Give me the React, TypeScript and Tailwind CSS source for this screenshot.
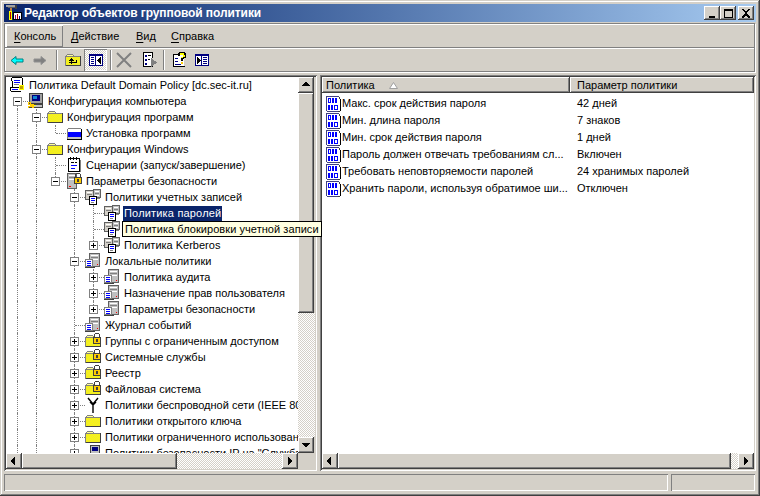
import { useId, type ReactNode } from "react";

const RAISED = "shadow-[inset_-1px_-1px_#404040,inset_1px_1px_#ffffff,inset_-2px_-2px_#808080,inset_2px_2px_#d4d0c8]";
const SUNKEN = "shadow-[inset_1px_1px_#808080,inset_-1px_-1px_#ffffff,inset_2px_2px_#404040,inset_-2px_-2px_#d4d0c8]";
const DITHER = "bg-[repeating-conic-gradient(#d4d0c8_0_25%,#ffffff_0_50%)] bg-[length:2px_2px]";

type R = [number, number, number, number, string];

const D = "dither";

const Pixels = ({ rects }: { rects?: R[] }) => {
  const id = "y" + useId().replace(/[^a-zA-Z0-9]/g, "");
  return (
    <svg width={16} height={16} viewBox="0 0 16 16" shapeRendering="crispEdges" className="shrink-0 block">
      <defs>
        <pattern id={id} width="2" height="2" patternUnits="userSpaceOnUse">
          <rect width="2" height="2" fill="#ffff00" />
          <rect width="1" height="1" fill="#e8e040" />
          <rect x="1" y="1" width="1" height="1" fill="#e8e040" />
        </pattern>
      </defs>
      {rects?.map(([x, y, w, h, c], i) => <rect key={i} x={x} y={y} width={w} height={h} fill={c === D ? `url(#${id})` : c} />)}
    </svg>
  );
};

const FOLDER: R[] = [
  [2, 2, 6, 1, "#808080"], [1, 3, 1, 1, "#808080"], [8, 3, 1, 1, "#808080"], [1, 4, 14, 1, "#808080"],
  [0, 4, 1, 10, "#808080"], [1, 13, 15, 1, "#404040"], [15, 4, 1, 10, "#404040"], [2, 3, 6, 1, "#ffff99"],
  [1, 5, 14, 8, D],
];

const LOCK: R[] = [
  [10, 0, 4, 1, "#404040"], [9, 1, 1, 4, "#404040"], [14, 1, 1, 4, "#404040"],
  [8, 4, 8, 7, "#404040"], [9, 5, 6, 5, "#ffcc00"], [11, 6, 2, 3, "#404040"],
];

const SERVERS: R[] = [
  [8, 0, 8, 9, "#606060"], [9, 1, 6, 7, "#c0c0c0"], [10, 2, 4, 1, "#ffffff"], [10, 4, 4, 1, "#808080"], [10, 6, 4, 1, "#ffffff"],
  [0, 1, 9, 10, "#606060"], [1, 2, 7, 8, "#d4d0c8"], [2, 3, 5, 1, "#ffffff"], [2, 5, 5, 1, "#808080"],
  [4, 7, 8, 9, "#000000"], [5, 8, 6, 7, "#ffffff"], [6, 9, 4, 1, "#0000ff"], [6, 11, 4, 1, "#0000ff"], [6, 13, 3, 1, "#808080"],
  [12, 9, 3, 1, "#808080"],
];

const LOCAL: R[] = [
  [4, 0, 11, 14, "#606060"], [5, 1, 9, 12, "#c0c0c0"], [6, 2, 7, 1, "#ffffff"], [6, 4, 7, 1, "#808080"], [6, 6, 7, 1, "#ffffff"],
  [12, 11, 1, 1, "#ff0000"], [0, 6, 8, 8, "#808080"], [1, 7, 6, 6, "#ffffff"], [2, 8, 4, 1, "#0000ff"], [2, 10, 4, 1, "#0000ff"],
  [2, 12, 4, 1, "#0000ff"], [0, 14, 10, 1, "#404040"],
];

const SCRIPT_ROOT: R[] = [
  [3, 0, 10, 1, "#000000"], [2, 1, 1, 3, "#000000"], [13, 1, 1, 9, "#000000"], [4, 1, 9, 9, "#ffffff"], [3, 4, 1, 8, "#000000"],
  [5, 3, 6, 1, "#0000ff"], [5, 5, 6, 1, "#0000ff"], [5, 7, 5, 1, "#808080"], [1, 10, 10, 1, "#000000"], [1, 11, 1, 3, "#000000"],
  [2, 11, 10, 3, "#ffffff"], [2, 14, 10, 1, "#000000"], [10, 8, 5, 5, "#ffff00"], [11, 9, 3, 3, "#c0a000"], [3, 12, 6, 1, "#0000ff"],
];

const COMPUTER: R[] = [
  [1, 0, 14, 11, "#404040"], [2, 1, 12, 9, "#a0a0a0"], [4, 2, 8, 6, "#000080"], [5, 3, 4, 3, "#1084d0"],
  [4, 11, 11, 4, "#404040"], [5, 12, 9, 2, "#c0c0c0"], [0, 9, 3, 3, "#ffcc00"], [1, 10, 1, 1, "#404040"], [2, 11, 4, 2, "#ffcc00"], [0, 13, 6, 2, "#ffcc00"],
  [1, 14, 3, 1, "#404040"], [6, 12, 2, 1, "#ffff00"],
];

const INSTALL: R[] = [
  [2, 3, 13, 1, "#808080"], [1, 4, 1, 10, "#808080"], [15, 4, 1, 10, "#000000"], [1, 14, 15, 1, "#000000"], [2, 4, 13, 3, "#ffffff"],
  [2, 7, 13, 5, "#0000ff"], [2, 12, 13, 2, "#c0c0c0"],
];

const SCRIPTS: R[] = [
  [2, 1, 12, 14, "#000000"], [3, 2, 10, 12, "#ffffff"], [4, 0, 1, 3, "#000000"], [7, 0, 1, 3, "#000000"], [10, 0, 1, 3, "#000000"],
  [5, 5, 3, 1, "#000000"], [9, 5, 2, 1, "#000000"], [5, 8, 6, 1, "#0000ff"], [5, 11, 4, 1, "#0000ff"], [14, 3, 1, 12, "#808080"],
];

const SECURITY: R[] = [
  [1, 0, 10, 16, "#606060"], [2, 1, 8, 14, "#c0c0c0"], [3, 2, 6, 1, "#ffffff"], [3, 4, 6, 1, "#808080"], [3, 6, 6, 1, "#ffffff"], [3, 13, 2, 1, "#ff0000"],
  ...LOCK,
];

const IPSEC: R[] = [
  [5, 0, 10, 9, "#404040"], [6, 1, 8, 7, "#c0c0c0"], [7, 2, 6, 4, "#000080"], [4, 9, 11, 6, "#808080"], [5, 10, 9, 4, "#c0c0c0"],
  [0, 10, 4, 4, "#ffcc00"], [1, 11, 2, 2, "#808000"], [4, 12, 4, 1, "#ffcc00"],
];

const ICONS: Record<string, R[]> = {
  script: SCRIPT_ROOT, computer: COMPUTER, folder: FOLDER, install: INSTALL, scripts: SCRIPTS, security: SECURITY,
  servers: SERVERS, local: LOCAL, lockfolder: [...FOLDER, ...LOCK], ipsec: IPSEC,
};

const Antenna = () => (
  <svg width={16} height={16} viewBox="0 0 16 16" className="shrink-0 block">
    <path d="M8 6V16M8 7L3 1M8 7L13 1M8 8L5 5M8 8L11 5" stroke="#000" strokeWidth="1.4" fill="none" />
  </svg>
);

const ListIcon = () => (
  <Pixels
    rects={[
      [0, 0, 13, 1, "#404080"], [0, 1, 1, 14, "#404080"], [1, 15, 11, 1, "#404080"], [13, 1, 1, 2, "#404040"], [14, 3, 1, 12, "#000000"], [12, 15, 2, 1, "#404040"],
      [1, 1, 12, 14, "#ffffff"], [13, 3, 1, 12, "#ffffff"],
      [2, 2, 3, 5, "#0000ff"], [3, 3, 1, 3, "#ffffff"], [6, 2, 2, 5, "#0000ff"], [9, 2, 2, 5, "#0000ff"],
      [2, 9, 2, 5, "#0000ff"], [5, 9, 2, 5, "#0000ff"], [8, 9, 4, 5, "#0000ff"], [9, 10, 2, 3, "#ffffff"],
    ]}
  />
);

type Row = { text: string; level: number; icon: string; exp?: "+" | "-"; guides?: number[]; last?: boolean; selected?: boolean };

const SEC = [1, 2, 4];
const ROWS: Row[] = [
  { text: "Политика Default Domain Policy [dc.sec-it.ru]", level: 0, icon: "script" },
  { text: "Конфигурация компьютера", level: 1, icon: "computer", exp: "-" },
  { text: "Конфигурация программ", level: 2, icon: "folder", exp: "-", guides: [1] },
  { text: "Установка программ", level: 3, icon: "install", guides: [1, 2], last: true },
  { text: "Конфигурация Windows", level: 2, icon: "folder", exp: "-", guides: [1] },
  { text: "Сценарии (запуск/завершение)", level: 3, icon: "scripts", guides: [1, 2] },
  { text: "Параметры безопасности", level: 3, icon: "security", exp: "-", guides: [1, 2], last: true },
  { text: "Политики учетных записей", level: 4, icon: "servers", exp: "-", guides: [1, 2] },
  { text: "Политика паролей", level: 5, icon: "servers", guides: SEC, selected: true },
  { text: "Политика блокировки учетной записи", level: 5, icon: "servers", guides: SEC },
  { text: "Политика Kerberos", level: 5, icon: "servers", exp: "+", guides: SEC, last: true },
  { text: "Локальные политики", level: 4, icon: "local", exp: "-", guides: [1, 2] },
  { text: "Политика аудита", level: 5, icon: "local", exp: "+", guides: SEC },
  { text: "Назначение прав пользователя", level: 5, icon: "local", exp: "+", guides: SEC },
  { text: "Параметры безопасности", level: 5, icon: "local", exp: "+", guides: SEC, last: true },
  { text: "Журнал событий", level: 4, icon: "local", guides: [1, 2] },
  { text: "Группы с ограниченным доступом", level: 4, icon: "lockfolder", exp: "+", guides: [1, 2] },
  { text: "Системные службы", level: 4, icon: "lockfolder", exp: "+", guides: [1, 2] },
  { text: "Реестр", level: 4, icon: "lockfolder", exp: "+", guides: [1, 2] },
  { text: "Файловая система", level: 4, icon: "lockfolder", exp: "+", guides: [1, 2] },
  { text: "Политики беспроводной сети (IEEE 802.11)", level: 4, icon: "antenna", exp: "+", guides: [1, 2] },
  { text: "Политики открытого ключа", level: 4, icon: "folder", exp: "+", guides: [1, 2] },
  { text: "Политики ограниченного использования программ", level: 4, icon: "folder", exp: "+", guides: [1, 2] },
  { text: "Политики безопасности IP на \"Служба каталогов\"", level: 4, icon: "ipsec", exp: "+", guides: [1, 2] },
];

const POLICIES = [
  ["Макс. срок действия пароля", "42 дней"],
  ["Мин. длина пароля", "7 знаков"],
  ["Мин. срок действия пароля", "1 дней"],
  ["Пароль должен отвечать требованиям сл...", "Включен"],
  ["Требовать неповторяемости паролей", "24 хранимых паролей"],
  ["Хранить пароли, используя обратимое ши...", "Отключен"],
];

const Expander = ({ sign }: { sign: "+" | "-" }) => (
  <span className="absolute left-[4px] top-[4px] w-[9px] h-[9px] bg-white border border-[#808080] flex items-center justify-center">
    <svg width={7} height={7} viewBox="0 0 7 7" shapeRendering="crispEdges" className="block">
      <rect x={1} y={3} width={5} height={1} fill="#000" />
      {sign === "+" && <rect x={3} y={1} width={1} height={5} fill="#000" />}
    </svg>
  </span>
);

const TreeRow = ({ row }: { row: Row }) => {
  const cells = [];
  for (let l = 1; l < row.level; l++) {
    cells.push(
      <span key={l} className="w-[19px] h-4 pl-[8px] shrink-0">
        {row.guides?.includes(l) && <span className="block h-full border-l border-dotted border-[#808080]" />}
      </span>
    );
  }
  return (
    <div className="flex h-4 items-center whitespace-nowrap">
      {cells}
      {row.level > 0 && (
        <span className="relative w-[19px] h-4 shrink-0">
          <span className={`absolute left-[8px] top-0 border-l border-dotted border-[#808080] ${row.last || row.level === 1 ? "h-[8px]" : "h-4"} ${row.level === 1 ? "top-[8px]" : ""}`} />
          <span className="absolute left-[9px] top-[8px] w-[10px] border-t border-dotted border-[#808080]" />
          {row.exp && <Expander sign={row.exp} />}
        </span>
      )}
      {row.icon === "antenna" ? <Antenna /> : <Pixels rects={ICONS[row.icon]} />}
      <span className={`ml-[3px] px-px h-[15px] leading-[14px] ${row.selected ? "bg-[#0a246a] text-white tracking-[0.18px]" : ""}`}>{row.text}</span>
    </div>
  );
};

const Arrow = ({ dir }: { dir: "up" | "down" | "left" | "right" }) => {
  const d = { up: "M4 1h1v1h1v1h1v1h1v1H0V4h1V3h1V2h1V1z", down: "M0 2h8v1H7v1H6v1H5v1H4V6H3V5H2V4H1V3H0z", left: "M5 0v8H4V7H3V6H2V5H1V3h1V2h1V1h1V0z", right: "M2 0h1v1h1v1h1v1h1v2H5v1H4v1H3v1H2z" }[dir];
  return (
    <svg width={8} height={8} viewBox="0 0 8 8" shapeRendering="crispEdges" className="block">
      <path d={d} fill="#000" />
    </svg>
  );
};

const ArrowBtn = ({ dir, className = "" }: { dir: "up" | "down" | "left" | "right"; className?: string }) => (
  <div className={`w-4 h-4 shrink-0 bg-[#d4d0c8] flex items-center justify-center ${RAISED} ${className}`}>
    <Arrow dir={dir} />
  </div>
);

const ToolBtn = ({ children, checked }: { children: ReactNode; checked?: boolean }) => (
  <div
    className={`w-[23px] h-[22px] shrink-0 flex items-center justify-center ${
      checked ? `${DITHER} shadow-[inset_1px_1px_#808080,inset_-1px_-1px_#ffffff]` : ""
    }`}
  >
    {children}
  </div>
);

const ToolSep = ({ className = "" }: { className?: string }) => (
  <div className={`w-[2px] h-[20px] shrink-0 border-l border-[#808080] border-r-white border-r ${className}`} />
);

const CtrlBtn = ({ children, className = "" }: { children: ReactNode; className?: string }) => (
  <div className={`w-4 h-[14px] bg-[#d4d0c8] flex items-center justify-center ${RAISED} ${className}`}>
    <svg width={10} height={9} viewBox="0 0 10 9" shapeRendering="crispEdges" className="block">
      {children}
    </svg>
  </div>
);

const MenuItem = ({ first, rest, className }: { first: string; rest: string; className: string }) => (
  <div className={`h-[22px] pl-2 flex items-center shrink-0 ${className}`}>
    <u className="underline-offset-2">{first}</u>
    {rest}
  </div>
);

const GridWindow = ({ left }: { left: boolean }) => (
  <Pixels
    rects={[
      [1, 2, 14, 12, "#000080"], [2, 4, 5, 9, "#ffffff"], [8, 4, 6, 9, "#ffffff"],
      ...(left
        ? ([[3, 5, 3, 1, "#000080"], [3, 7, 3, 1, "#000080"], [3, 9, 3, 1, "#000080"], [3, 11, 3, 1, "#000080"], [12, 5, 1, 7, "#000"], [11, 6, 1, 5, "#000"], [10, 7, 1, 3, "#000"], [9, 8, 1, 1, "#000"]] as R[])
        : ([[9, 5, 4, 1, "#000080"], [9, 7, 4, 1, "#000080"], [9, 9, 4, 1, "#000080"], [9, 11, 4, 1, "#000080"], [3, 5, 1, 7, "#000"], [4, 6, 1, 5, "#000"], [5, 7, 1, 3, "#000"], [6, 8, 1, 1, "#000"]] as R[])),
    ]}
  />
);

export default function App() {
  return (
    <div className={`w-[760px] h-[496px] bg-[#d4d0c8] flex flex-col pt-[4px] px-[4px] overflow-hidden text-[11px] text-black font-['Liberation_Sans',sans-serif] shadow-[inset_-1px_-1px_#404040,inset_1px_1px_#d4d0c8,inset_-2px_-2px_#808080,inset_2px_2px_#ffffff]`}>
      {/* title bar */}
      <div className="h-[18px] shrink-0 flex items-center bg-gradient-to-r from-[#0a246a] to-[#a6caf0] pl-[2px] pr-[2px]">
        <Pixels
          rects={[
            [0, 0, 10, 2, "#a0a0a0"], [2, 2, 8, 1, "#606060"], [9, 0, 2, 4, "#404040"], [4, 3, 2, 3, "#c08040"], [3, 6, 3, 9, "#ffff00"], [4, 7, 1, 7, "#c00000"],
            [7, 7, 9, 8, "#000000"], [8, 8, 7, 6, "#ffffff"], [9, 10, 1, 4, "#800080"], [11, 9, 1, 5, "#c00000"], [13, 11, 1, 3, "#000080"],
          ]}
        />
        <span className="ml-[2px] text-white font-bold text-[12px] tracking-[-0.08px] whitespace-nowrap">Редактор объектов групповой политики</span>
        <div className="ml-auto flex items-center">
          <CtrlBtn><rect x={2} y={7} width={6} height={2} fill="#000" /></CtrlBtn>
          <CtrlBtn>
            <rect x={1} y={0} width={9} height={2} fill="#000" />
            <rect x={1} y={2} width={1} height={7} fill="#000" />
            <rect x={9} y={2} width={1} height={7} fill="#000" />
            <rect x={1} y={8} width={9} height={1} fill="#000" />
          </CtrlBtn>
          <CtrlBtn className="ml-[2px]">
            <path d="M1 0h2v1h1v1h2V1h1V0h2v1H8v1H7v1H6v2h1v1h1v1h1v2H7V8H6V7H4v1H3v1H1V7h1V6h1V5h1V3H3V2H2V1H1z" fill="#000" />
          </CtrlBtn>
        </div>
      </div>

      {/* menu + toolbar */}
      <div className="mt-px w-[751px] h-[49px] shrink-0 border border-[#808080] shadow-[inset_1px_1px_#ffffff,1px_1px_#ffffff] flex flex-col">
        <div className="h-[23px] pt-px pl-px flex shrink-0">
          <MenuItem first="К" rest="онсоль" className="w-[57px] shadow-[inset_1px_1px_#ffffff,inset_-1px_-1px_#808080]" />
          <MenuItem first="Д" rest="ействие" className="w-[65px]" />
          <MenuItem first="В" rest="ид" className="w-[35px]" />
          <MenuItem first="С" rest="правка" className="w-[60px]" />
        </div>
        <div className="h-[2px] shrink-0 border-t border-[#808080] border-b border-b-white" />
        <div className="h-[22px] pl-px flex items-center">
          <ToolBtn>
            <svg width={16} height={16} viewBox="0 0 16 16" className="block -translate-x-px"><path d="M2 8.5L7 4.5V7H14V10H7V12.5Z" fill="#00ffff" stroke="#008080" /></svg>
          </ToolBtn>
          <ToolBtn>
            <svg width={16} height={16} viewBox="0 0 16 16" className="block -translate-x-px"><path d="M14 8.5L9 4.5V7H2V10H9V12.5Z" fill="#808080" stroke="#909090" /></svg>
          </ToolBtn>
          <ToolSep className="ml-[4px] mr-[3px]" />
          <ToolBtn>
            <Pixels rects={[...FOLDER, [4, 10, 8, 1, "#000"], [11, 8, 1, 2, "#000"], [6, 6, 1, 6, "#000"], [5, 7, 3, 1, "#000"], [4, 8, 5, 1, "#000"]]} />
          </ToolBtn>
          <ToolBtn checked><GridWindow left /></ToolBtn>
          <ToolSep className="ml-[3px]" />
          <ToolBtn>
            <svg width={16} height={16} viewBox="0 0 16 16" className="block"><path d="M1 1L15 15M15 1L1 15" stroke="#808080" strokeWidth="2" /></svg>
          </ToolBtn>
          <div className="w-[2px] shrink-0" />
          <ToolBtn>
            <Pixels rects={[[2, 0, 9, 1, "#000"], [2, 0, 1, 15, "#000"], [2, 14, 10, 1, "#000"], [11, 0, 1, 6, "#000"], [3, 1, 8, 13, "#fff"], [4, 3, 2, 2, "#000080"], [7, 3, 3, 1, "#000"], [4, 7, 2, 2, "#000080"], [7, 7, 2, 1, "#000"], [4, 11, 2, 2, "#000080"], [11, 9, 3, 3, "#808080"], [10, 6, 1, 9, "#808080"], [11, 7, 1, 7, "#808080"], [12, 8, 1, 5, "#808080"], [13, 9, 2, 3, "#808080"], [15, 10, 1, 1, "#808080"]]} />
          </ToolBtn>
          <ToolSep className="ml-[3px]" />
          <div className="w-[2px] shrink-0" />
          <ToolBtn>
            <Pixels rects={[[2, 2, 12, 1, "#000"], [2, 2, 1, 13, "#000"], [2, 14, 12, 1, "#000"], [3, 3, 10, 11, "#fff"], [4, 6, 3, 1, "#000080"], [4, 9, 3, 1, "#000080"], [4, 12, 6, 1, "#000080"], [8, 0, 6, 2, "#000"], [7, 1, 2, 3, "#000"], [13, 1, 2, 5, "#000"], [9, 1, 4, 2, "#ffff00"], [12, 3, 2, 2, "#ffff00"], [10, 5, 3, 2, "#000"], [10, 5, 2, 1, "#ffff00"], [10, 7, 2, 2, "#000"], [10, 10, 2, 2, "#ffcc00"]]} />
          </ToolBtn>
          <ToolBtn><GridWindow left={false} /></ToolBtn>
        </div>
      </div>

      {/* panes */}
      <div className="mt-[3px] h-[396px] shrink-0 flex gap-[3px]">
        <div className={`relative w-[313px] p-[2px] flex flex-col ${SUNKEN}`}>
          <div className="flex-1 min-h-0 flex">
            <div className="w-[292px] bg-white pl-[3px] overflow-hidden">
              {ROWS.map((r, i) => <TreeRow key={i} row={r} />)}
            </div>
            <div className="w-[17px] flex flex-col">
              <ArrowBtn dir="up" className="w-[16px]" />
              <div className={`h-[220px] w-[16px] bg-[#d4d0c8] ${RAISED}`} />
              <div className={`flex-1 ${DITHER}`} />
              <ArrowBtn dir="down" className="w-[16px]" />
            </div>
          </div>
          <div className="h-4 shrink-0 flex">
            <ArrowBtn dir="left" />
            <div className={`w-[155px] bg-[#d4d0c8] ${RAISED}`} />
            <div className={`w-[105px] ${DITHER}`} />
            <ArrowBtn dir="right" />
            <div className="flex-1 bg-[#d4d0c8]" />
          </div>
          <div className="absolute left-[118px] top-[146px] w-[200px] h-[16px] bg-[#ffffe1] border border-black pl-[2px] leading-[14px] tracking-[0.06px] whitespace-nowrap">
            Политика блокировки учетной записи
          </div>
        </div>

        <div className={`w-[436px] p-[2px] flex flex-col ${SUNKEN}`}>
          <div className="h-4 shrink-0 flex bg-[#d4d0c8]">
            <div className={`w-[248px] pl-[4px] flex items-center ${RAISED}`}>
              Политика
              <svg width={9} height={7} viewBox="0 0 9 7" className="block ml-[14px]">
                <path d="M4.5 .5L8.5 6.5H.5Z" fill="#fff" stroke="#a0a0a0" />
              </svg>
            </div>
            <div className={`flex-1 pl-[7px] flex items-center ${RAISED}`}>Параметр политики</div>
          </div>
          <div className="flex-1 min-h-0 bg-white pt-[2px] pl-[4px]">
            {POLICIES.map(([name, value]) => (
              <div key={name} className="h-[17px] flex items-center whitespace-nowrap">
                <div className="w-[244px] flex items-center shrink-0">
                  <ListIcon />
                  <span>{name}</span>
                </div>
                <span className="ml-[7px]">{value}</span>
              </div>
            ))}
          </div>
          <div className="h-4 shrink-0 flex">
            <ArrowBtn dir="left" />
            <div className={`w-[393px] bg-[#d4d0c8] ${RAISED}`} />
            <div className={`flex-1 ${DITHER}`} />
            <ArrowBtn dir="right" />
          </div>
        </div>
      </div>

      {/* status bar */}
      <div className="mt-[3px] h-[17px] shrink-0 flex gap-[3px] w-[751px]">
        <div className="w-[664px] shadow-[inset_1px_1px_#808080,inset_-1px_-1px_#ffffff]" />
        <div className="flex-1 shadow-[inset_1px_1px_#808080,inset_-1px_-1px_#ffffff]" />
      </div>
    </div>
  );
}
